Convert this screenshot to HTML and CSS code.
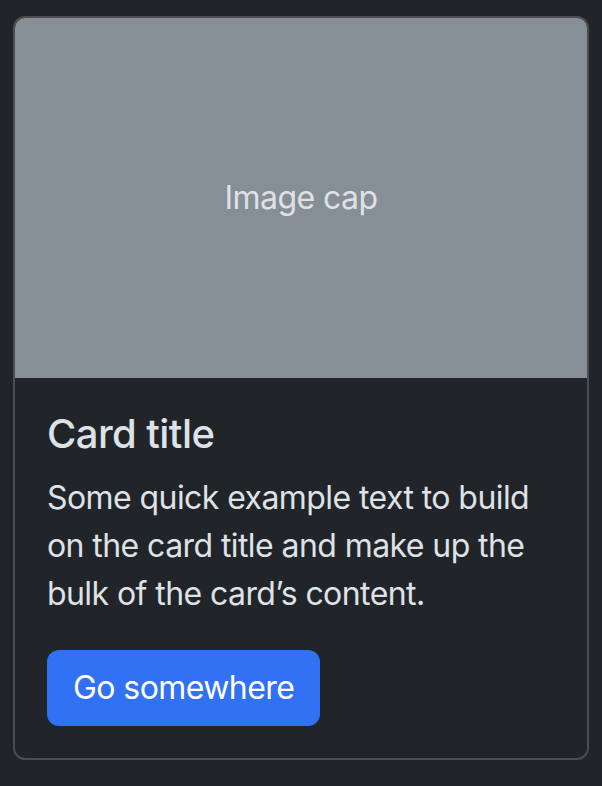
FILE: index.html
```html
<!DOCTYPE html>
<html lang="en">
<head>
<meta charset="utf-8">
<link rel="stylesheet" href="styles.css">
</head>
<body>
<div class="card">
  <div class="card-img"><span>Image cap</span></div>
  <div class="card-body">
    <h5 class="card-title">Card title</h5>
    <p class="card-text">Some quick example text to build on the card title and make up the bulk of the card’s content.</p>
    <a class="btn" href="#">Go somewhere</a>
  </div>
</div>
</body>
</html>
```
FILE: styles.css
```css
html, body {
  margin: 0;
  background: #212529;
}
body {
  padding: 16px 13px;
  font-family: Inter, "Noto Sans", sans-serif;
  color: #dee2e6;
  font-size: 32px;
  line-height: 1.5;
  letter-spacing: -0.018em;
}
.card {
  width: 576px;
  box-sizing: border-box;
  border: 2px solid #4a4e53;
  border-radius: 12px;
  overflow: hidden;
  background: #212529;
}
.card-img {
  height: 360px;
  background: #868e96;
  display: flex;
  align-items: center;
  justify-content: center;
  color: #dee2e6;
}
.card-body {
  padding: 32px;
}
.card-title {
  margin: 0 0 16px;
  font-size: 40px;
  font-weight: 500;
  line-height: 1.2;
}
.card-text {
  margin: 0 0 32px;
}
.btn {
  display: inline-block;
  padding: 12px 24px;
  border: 2px solid #3171f4;
  border-radius: 12px;
  background: #3171f4;
  color: #fff;
  text-decoration: none;
}
```
